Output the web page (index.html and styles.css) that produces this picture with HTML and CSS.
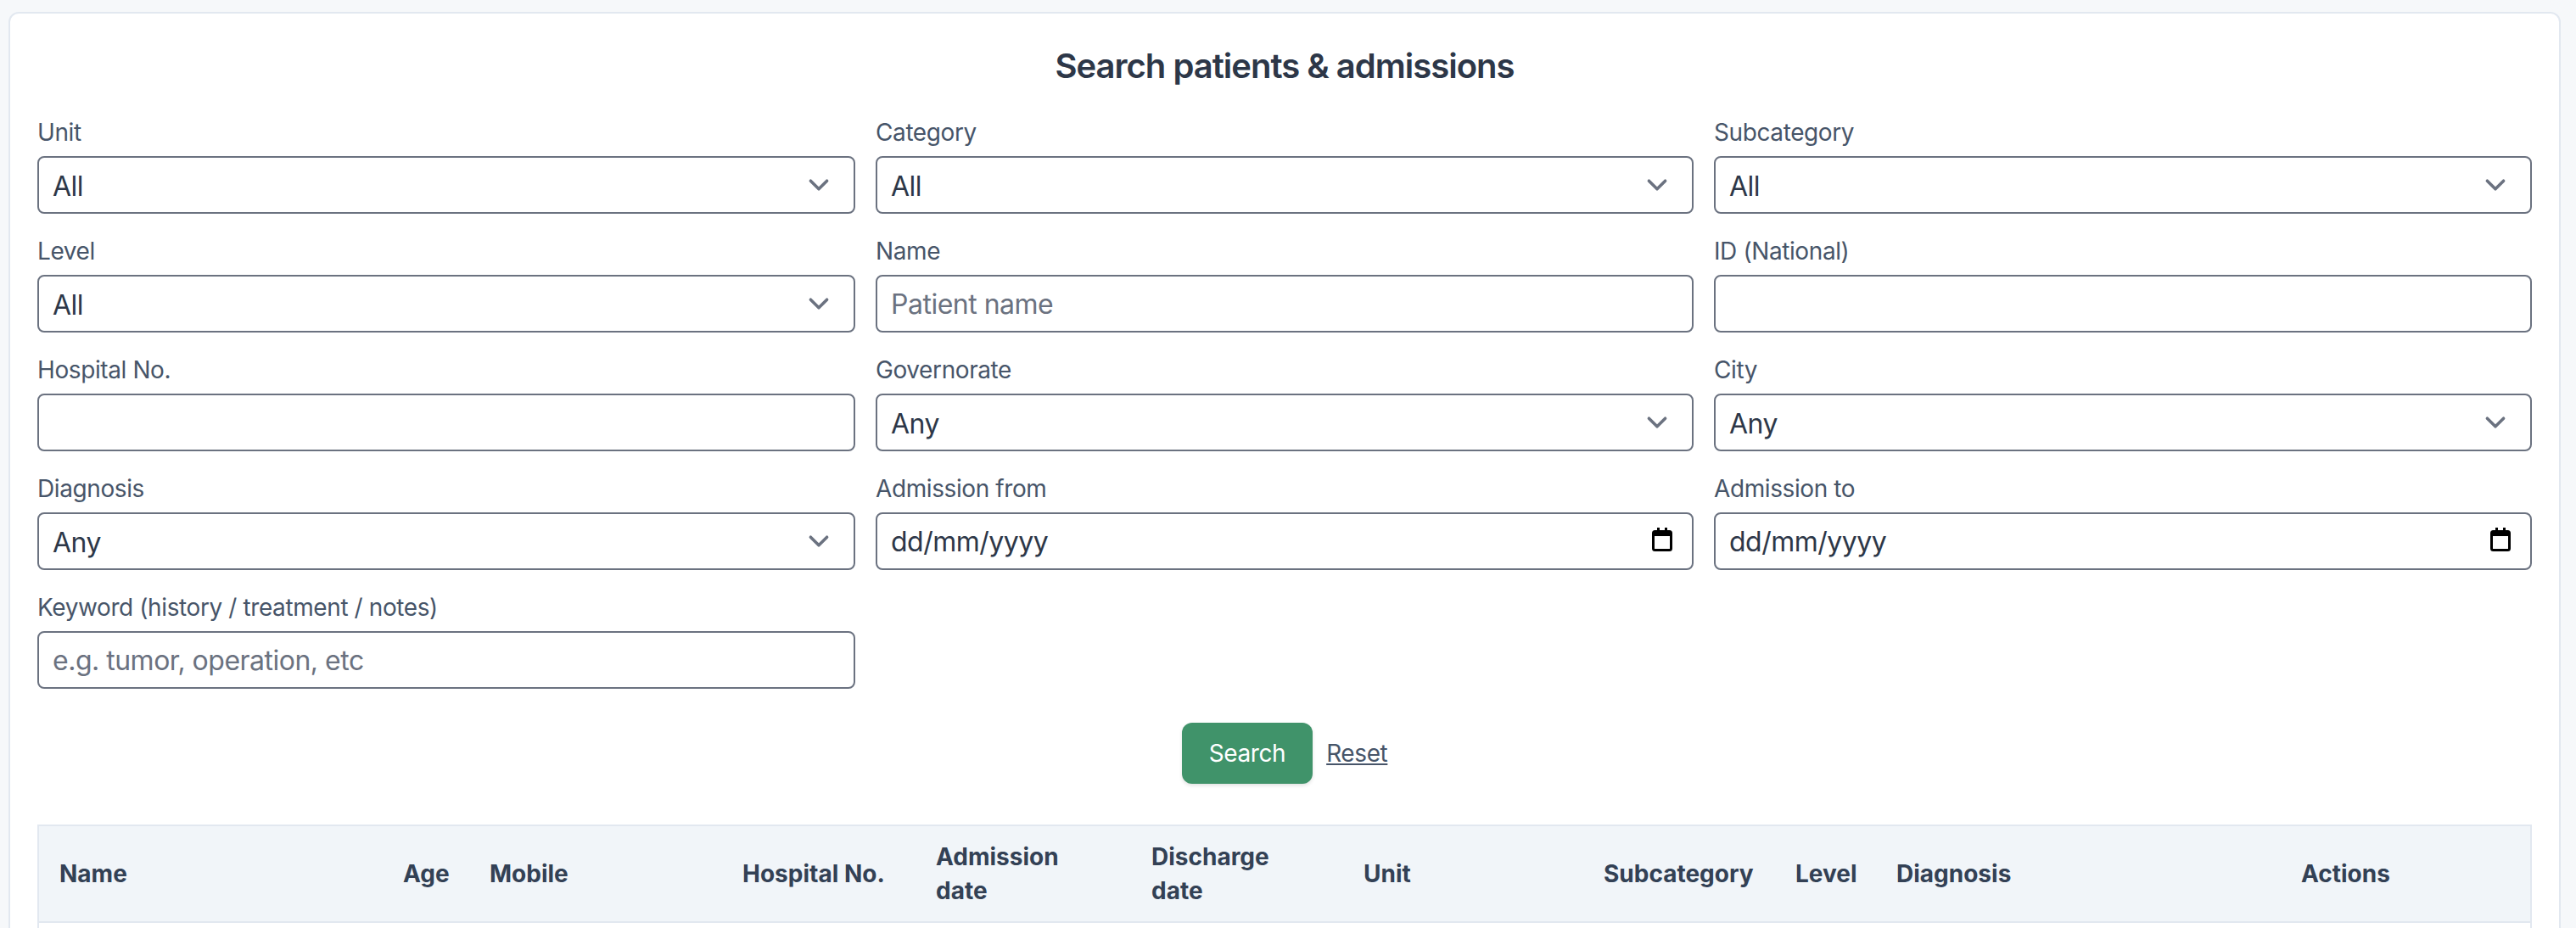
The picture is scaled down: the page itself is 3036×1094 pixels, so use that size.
FILE: index.html
```html
<!DOCTYPE html>
<html lang="en">
<head>
    <meta charset="UTF-8">
    <title>Search patients &amp; admissions</title>
    <link rel="stylesheet" href="styles.css">
</head>
<body>
    <main class="card">
        <h1 class="title">Search patients &amp; admissions</h1>
        <form class="filters">
            <div class="field">
                <label>Unit</label>
                <div class="control">
                    <select><option>All</option></select>
                    <svg class="chevron" viewBox="0 0 20 20"><path d="M6 8l4 4 4-4"/></svg>
                </div>
            </div>
            <div class="field">
                <label>Category</label>
                <div class="control">
                    <select><option>All</option></select>
                    <svg class="chevron" viewBox="0 0 20 20"><path d="M6 8l4 4 4-4"/></svg>
                </div>
            </div>
            <div class="field">
                <label>Subcategory</label>
                <div class="control">
                    <select><option>All</option></select>
                    <svg class="chevron" viewBox="0 0 20 20"><path d="M6 8l4 4 4-4"/></svg>
                </div>
            </div>
            <div class="field">
                <label>Level</label>
                <div class="control">
                    <select><option>All</option></select>
                    <svg class="chevron" viewBox="0 0 20 20"><path d="M6 8l4 4 4-4"/></svg>
                </div>
            </div>
            <div class="field">
                <label>Name</label>
                <div class="control"><input type="text" placeholder="Patient name"></div>
            </div>
            <div class="field">
                <label>ID (National)</label>
                <div class="control"><input type="text"></div>
            </div>
            <div class="field">
                <label>Hospital No.</label>
                <div class="control"><input type="text"></div>
            </div>
            <div class="field">
                <label>Governorate</label>
                <div class="control">
                    <select><option>Any</option></select>
                    <svg class="chevron" viewBox="0 0 20 20"><path d="M6 8l4 4 4-4"/></svg>
                </div>
            </div>
            <div class="field">
                <label>City</label>
                <div class="control">
                    <select><option>Any</option></select>
                    <svg class="chevron" viewBox="0 0 20 20"><path d="M6 8l4 4 4-4"/></svg>
                </div>
            </div>
            <div class="field">
                <label>Diagnosis</label>
                <div class="control">
                    <select><option>Any</option></select>
                    <svg class="chevron" viewBox="0 0 20 20"><path d="M6 8l4 4 4-4"/></svg>
                </div>
            </div>
            <div class="field">
                <label>Admission from</label>
                <div class="control">
                    <input type="text" value="dd/mm/yyyy">
                    <svg class="calendar" viewBox="0 0 24 28"><path d="M6 0h3v3h6V0h3v3h2.500A3.500 3.500 0 0 1 24 6.500v18a3.500 3.500 0 0 1-3.500 3.500h-17A3.500 3.500 0 0 1 0 24.500v-18A3.500 3.500 0 0 1 3.500 3H6zM3 10v14.500a.5.500 0 0 0 .5.5h17a.5.500 0 0 0 .5-.5V10z"/></svg>
                </div>
            </div>
            <div class="field">
                <label>Admission to</label>
                <div class="control">
                    <input type="text" value="dd/mm/yyyy">
                    <svg class="calendar" viewBox="0 0 24 28"><path d="M6 0h3v3h6V0h3v3h2.500A3.500 3.500 0 0 1 24 6.500v18a3.500 3.500 0 0 1-3.500 3.500h-17A3.500 3.500 0 0 1 0 24.500v-18A3.500 3.500 0 0 1 3.500 3H6zM3 10v14.500a.5.500 0 0 0 .5.5h17a.5.500 0 0 0 .5-.5V10z"/></svg>
                </div>
            </div>
            <div class="field">
                <label>Keyword (history / treatment / notes)</label>
                <div class="control"><input type="text" placeholder="e.g. tumor, operation, etc"></div>
            </div>
        </form>
        <div class="form-actions">
            <button type="button" class="btn-search">Search</button>
            <a class="link-reset" href="#">Reset</a>
        </div>
        <div class="table-wrap">
            <table class="results">
                <thead>
                    <tr>
                        <th>Name</th>
                        <th>Age</th>
                        <th>Mobile</th>
                        <th>Hospital No.</th>
                        <th>Admission date</th>
                        <th>Discharge date</th>
                        <th>Unit</th>
                        <th>Subcategory</th>
                        <th>Level</th>
                        <th>Diagnosis</th>
                        <th>Actions</th>
                    </tr>
                </thead>
                <tbody>
                    <tr><td colspan="11"></td></tr>
                </tbody>
            </table>
        </div>
    </main>
</body>
</html>
```
FILE: styles.css
```css
* {
    box-sizing: border-box;
    margin: 0;
    padding: 0;
}
html, body {
    height: 1094px;
    overflow: hidden;
}
body {
    background: #f6f8fa;
    font-family: Inter, "Liberation Sans", sans-serif;
    color: #2d3748;
    padding: 14px 18px 0 10px;
}
.card {
    background: #fff;
    border: 2px solid #e2e8f0;
    border-radius: 12px;
    padding: 32px;
    height: 1200px;
}
.title {
    font-size: 40px;
    line-height: 56px;
    font-weight: 600;
    letter-spacing: -1px;
    text-align: center;
    color: #2d3748;
    margin-top: 2px;
    margin-bottom: 30px;
}
.filters {
    display: grid;
    grid-template-columns: repeat(3, 1fr);
    gap: 24px;
}
.field label {
    display: block;
    font-size: 28px;
    line-height: 40px;
    letter-spacing: -0.4px;
    color: #475569;
    margin-bottom: 8px;
}
.control {
    position: relative;
}
.control select,
.control input {
    display: block;
    width: 100%;
    height: 68px;
    padding: 8px 16px;
    border: 2px solid #6b7280;
    border-radius: 8px;
    background: #fff;
    font-family: inherit;
    font-size: 32px;
    line-height: 48px;
    letter-spacing: -0.5px;
    color: #2d3748;
    appearance: none;
}
.control select {
    padding-top: 10px;
}
.control input::placeholder {
    color: #6b7280;
    opacity: 1;
}
.chevron {
    position: absolute;
    top: 10px;
    right: 19px;
    width: 48px;
    height: 48px;
    fill: none;
    stroke: #6b7280;
    stroke-width: 1.5;
    stroke-linecap: round;
    stroke-linejoin: round;
    pointer-events: none;
}
.calendar {
    position: absolute;
    top: 18px;
    right: 25px;
    width: 24px;
    height: 28px;
    fill: #000;
    pointer-events: none;
}
.form-actions {
    display: flex;
    justify-content: center;
    align-items: center;
    gap: 16px;
    margin-top: 40px;
}
.btn-search {
    height: 72px;
    padding: 0 32px;
    border: 0;
    border-radius: 12px;
    background: #40936a;
    box-shadow: 0 2px 4px rgba(0, 0, 0, 0.12);
    font-family: inherit;
    font-size: 28px;
    line-height: 40px;
    letter-spacing: -0.4px;
    color: #fff;
}
.link-reset {
    font-size: 28px;
    line-height: 40px;
    letter-spacing: -0.4px;
    color: #475569;
    text-decoration: underline;
}
.table-wrap {
    margin-top: 48px;
    border: 2px solid #e2e8f0;
}
.results {
    width: 100%;
    border-collapse: separate;
    border-spacing: 0;
    table-layout: fixed;
}
.results th {
    padding: 16px 24px;
    background: #f1f5f9;
    border-bottom: 2px solid #e2e8f0;
    font-size: 28px;
    line-height: 40px;
    font-weight: 700;
    text-align: left;
    color: #334155;
}
.results td {
    height: 80px;
}
.results th:nth-child(1) { width: 405px; }
.results th:nth-child(2) { width: 102px; }
.results th:nth-child(3) { width: 298px; }
.results th:nth-child(4) { width: 228px; }
.results th:nth-child(5) { width: 254px; }
.results th:nth-child(6) { width: 250px; }
.results th:nth-child(7) { width: 283px; }
.results th:nth-child(8) { width: 226px; }
.results th:nth-child(9) { width: 119px; }
.results th:nth-child(10) { width: 477px; }
.results th:nth-child(11) { width: 294px; }
```
